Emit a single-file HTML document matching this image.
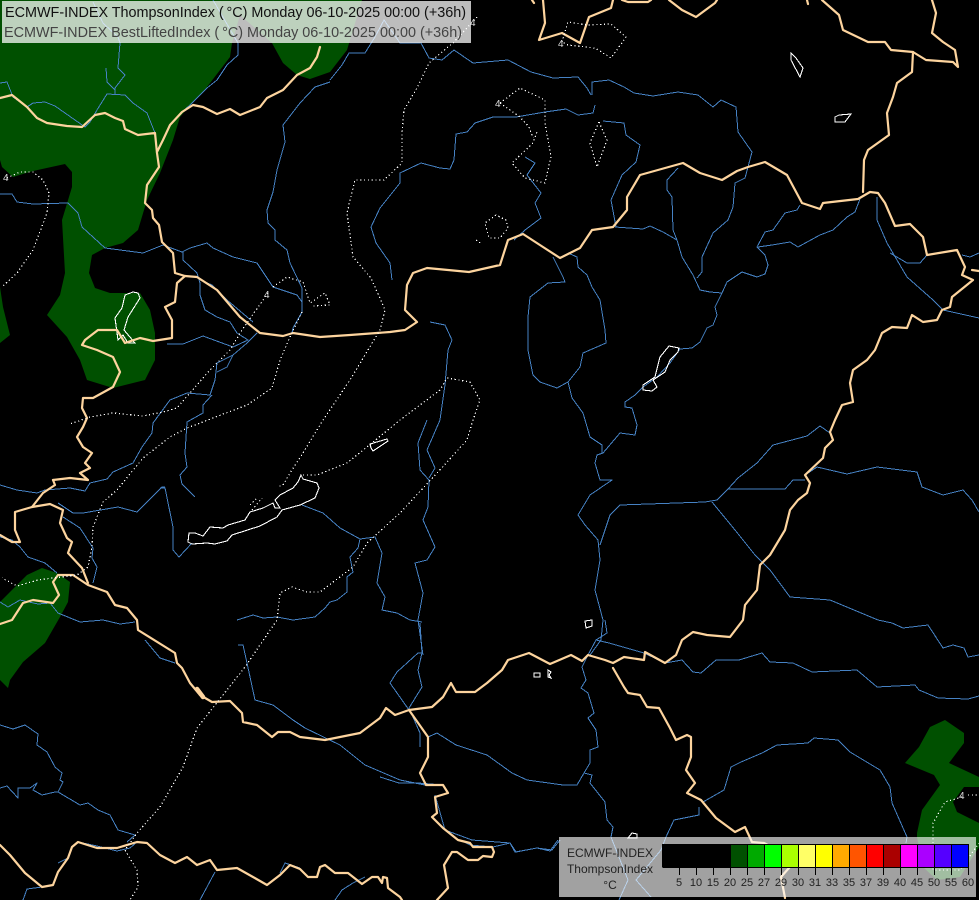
<!DOCTYPE html>
<html><head><meta charset="utf-8"><title>ECMWF-INDEX</title>
<style>
html,body{margin:0;padding:0;background:#000;width:979px;height:900px;overflow:hidden}
svg{display:block;position:absolute;left:0;top:0}
text{font-family:"Liberation Sans",sans-serif}
.r{fill:none;stroke:#4682c4;stroke-width:1;stroke-linejoin:round;shape-rendering:crispEdges}
.b{fill:none;stroke:#fdd49e;stroke-width:2.2;stroke-linejoin:round;stroke-linecap:round}
.d{fill:none;stroke:#fff;stroke-width:1.2;stroke-dasharray:1.2 2.6;shape-rendering:crispEdges}
.l{fill:none;stroke:#fff;stroke-width:1.1;shape-rendering:crispEdges}
.t{font-size:11px;fill:#222;text-anchor:middle}
</style></head><body>
<svg width="979" height="900" viewBox="0 0 979 900" xmlns="http://www.w3.org/2000/svg">
<rect width="979" height="900" fill="#000"/>
<g fill="#005000">
<path d="M0,0 L362,0 347,50 330,72 310,79 297,75 283,63 272,43 240,15 232,43 230,57 207,87 192,103 180,117 173,140 160,173 147,200 138,230 123,243 105,248 92,255 89,273 95,288 110,293 140,293 150,310 155,333 155,360 145,380 113,388 87,380 80,360 67,337 47,315 60,295 65,273 62,220 72,187 72,172 65,164 33,171 13,177 2,167 0,160Z"/>
<path d="M0,287 3,307 10,335 0,343Z"/>
<path d="M42,568 57,573 70,582 68,602 60,617 45,643 23,662 10,680 8,688 0,680 0,602 17,585 27,575Z"/>
<path d="M945,720 964,733 964,743 949,763 979,777 979,787 964,787 953,802 957,812 979,823 979,847 960,877 937,880 923,867 917,837 917,833 922,810 940,785 934,775 905,763 919,747 930,727Z"/>
</g>
<g class="r">
<path d="M0,83 7,82 13,97 20,102 27,107 33,103 45,102 55,106 75,120 85,127 90,122 97,110 107,94 125,95 133,103 147,113 153,128 155,133"/>
<path d="M93,2 103,23 118,37 120,43 118,68 125,75 115,88 115,95"/>
<path d="M106,68 107,82 115,90"/>
<path d="M213,0 238,43 238,55 227,65 217,80 207,88 195,100 190,105 182,112"/>
<path d="M330,80 342,65 349,53 365,53 375,37 384,20 400,43 421,43 429,58 442,60 454,50 473,63 508,60 531,72 553,78 578,77 587,88 591,95"/>
<path d="M592,95 592,82 609,80 624,87 634,93 653,96 678,92 698,95 713,107 721,100 736,107 738,132 752,152 748,167"/>
<path d="M330,82 315,87 300,103 283,125 285,142 277,170 273,192 267,210 268,223 275,230 275,240 287,250 290,263 302,288 302,312 293,328 292,333"/>
<path d="M595,105 593,113 578,115 566,109 545,112 516,117 493,117 475,123 467,132 456,134 454,160 450,169 440,168 421,163 400,173 400,183 380,208 371,227 376,243 390,263 392,280"/>
<path d="M603,121 624,123 626,135 640,145 636,162 622,175 611,200 616,227"/>
<path d="M525,157 535,163 527,175 541,193 535,203 541,218 525,230 514,240"/>
<path d="M615,227 643,229 650,226 663,232 677,240 682,257 693,275 700,290 710,292 722,293"/>
<path d="M678,168 667,180 667,190 672,197 673,230 677,240"/>
<path d="M748,167 745,178 735,183 733,207 728,220 713,233 702,257 702,272 697,278"/>
<path d="M800,205 797,210 785,213 773,230 765,232 757,247 765,255 768,265 765,274 757,277 742,272 727,282 722,293 715,307 717,315 713,325 707,328 700,342 692,348 680,349 670,363 657,377 643,387 635,395 625,402 625,407 632,408 637,425 635,435 620,433 603,453 597,455 595,463 600,480 612,480 590,495 578,515 585,525 598,540 600,560 595,590 603,620 601,640 590,655"/>
<path d="M758,247 772,245 790,242 798,247 820,235 833,230 847,217 855,212 860,199"/>
<path d="M568,253 577,257 578,267 587,275 592,287 600,300 605,330 606,343 583,353 580,367 568,382 557,388 540,382 533,375 528,350 528,317 530,297 548,283 565,282 563,277 553,257"/>
<path d="M568,382 572,398 583,413 590,437 602,445 602,453"/>
<path d="M877,197 877,220 887,243 907,277 933,300 943,310 979,318"/>
<path d="M890,253 907,263 920,263 927,255"/><path d="M962,255 970,257 979,253"/>
<path d="M830,433 820,426 807,436 773,445 757,463 738,478 728,489 785,489 793,480 805,480"/>
<path d="M808,473 817,467 847,474 877,467 917,472 922,487 943,495 963,490 972,500 979,512"/>
<path d="M728,489 717,500 705,502 620,505 610,515 600,545"/>
<path d="M712,502 735,530 755,555 770,570 790,597 830,600 878,620 892,623 903,628 928,625 943,648 953,645 964,648 968,657 979,655"/>
<path d="M596,640 609,643 644,653 665,663 682,660 693,672 701,673 716,660 739,660 762,653 770,662 793,663 812,672 857,670 877,687 915,685 919,690 938,698 968,699 979,696"/>
<path d="M605,620 607,633 596,640 588,655 582,667 586,680 581,688 588,693 594,713 588,718 596,730 598,747 590,750 590,763 584,773 577,785 563,785 527,780 512,773 487,755 456,745 437,733 428,737"/>
<path d="M584,773 592,775 590,783 605,802 607,820 613,827 611,837 628,880 619,900"/>
<path d="M703,802 724,790 731,767 741,762 762,753 777,745 808,743 814,738 838,740 850,752 880,770 890,787 892,803 907,837 906,843"/>
<path d="M699,807 699,815 674,820 666,837 661,850 636,880 651,897"/>
<path d="M380,777 399,783 418,783 443,785"/>
<path d="M420,623 422,653 418,670 422,687 409,708 420,733 420,747"/>
<path d="M422,653 418,653 397,672 390,683 409,710"/>
<path d="M435,795 445,830 472,840 510,843 516,852 537,848 552,850 560,840"/>
<path d="M460,840 470,845 493,847 510,843 515,852 537,848 550,851 558,840"/>
<path d="M212,395 203,405 203,413 187,422 185,453 187,467 180,475 182,484 195,497"/>
<path d="M160,488 165,488 173,527 173,550 179,557 192,543"/>
<path d="M302,505 323,513 340,528 360,539 375,537 382,553 377,583 385,597 382,610 397,613 410,620 422,622"/>
<path d="M360,539 358,548 350,557 353,572 347,577 347,592 337,600 330,602 325,608 315,617 293,620 277,617 263,618 253,615 237,620"/>
<path d="M238,645 243,645 247,663 255,700 273,705 293,720 305,728 340,745 365,765 400,780 425,785"/>
<path d="M427,420 418,443 420,470 429,480 428,507 423,520 435,547 427,560 415,563 423,593 418,620 423,655"/>
<path d="M440,420 427,450 435,468 429,478"/>
<path d="M430,322 445,325 452,340 448,350 445,385 440,420"/>
<path d="M0,194 12,194 17,202 33,204 68,203 78,213 82,227 105,248 143,253 163,245"/>
<path d="M163,245 182,252 190,248 207,243 213,248 233,257 257,263 273,287 297,295 302,302"/>
<path d="M183,252 183,260 197,273 200,283 200,295 205,310 217,317 230,322 237,333 248,340 233,347 203,336 183,344 167,344"/>
<path d="M200,280 212,285 227,300 253,322"/>
<path d="M0,485 17,490 37,493 45,490 70,488 85,491 90,483 107,479 113,472 133,463 142,447 152,433 153,423 170,400 187,393 210,395 215,380 217,363 233,355 247,343 257,333"/>
<path d="M217,372 227,367 233,355"/>
<path d="M58,503 73,513 83,513 118,507 137,512 162,487 165,487"/>
<path d="M63,517 80,528 93,548 92,558 97,567 93,583"/>
<path d="M0,537 12,540 20,547 28,557 45,563 57,573"/>
<path d="M0,602 8,607 20,600 38,604 50,603 58,613 80,622 103,620 120,624 135,622"/>
<path d="M145,640 160,658 175,663"/>
<path d="M0,725 13,729 25,725 38,734 37,745 47,752 55,767 62,773 60,780 63,782 58,792 80,805 88,803 98,810 110,815 118,830 135,835 127,842"/>
<path d="M0,788 7,786 18,798 18,788 30,788 37,783 33,790 42,795 55,792 58,792"/>
<path d="M23,900 27,889 42,887"/><path d="M58,863 68,858"/><path d="M200,900 215,872"/><path d="M280,873 285,863 300,868"/>
<path d="M78,842 97,846 117,851 130,848 137,842"/>
<path d="M335,900 342,890 353,883 365,877"/>
</g>
<g class="l">
<path d="M189,533 188,542 192,544 207,543 215,544 227,541 232,535 260,526 277,517 282,510 300,505 315,498 319,488 317,483 303,479 301,475 298,482 293,488 280,495 275,500 280,508 275,508 273,503 263,508 250,512 245,520 228,525 223,528 210,527 203,536 195,533Z"/>
<path d="M370,444 387,439 388,441 373,451 371,448Z"/>
<path d="M669,346 660,357 655,377 643,385 643,390 652,391 657,387 653,380 665,372 670,360 678,352 679,348Z"/>
<path d="M133,292 125,295 122,308 115,318 118,340 123,335 128,343 135,343 124,330 128,317 140,298 138,293Z"/>
<path d="M791,53 791,60 800,77 803,68 796,58Z"/>
<path d="M835,117 835,122 845,122 851,114 839,115Z"/>
<path d="M534,673 540,673 540,677 534,677Z"/>
<path d="M548,670 551,672 549,675 551,678 548,677Z"/>
<path d="M585,621 592,620 592,626 586,628Z"/>
<path d="M628,838 632,833 637,834 637,838Z"/>
</g>
<g class="b">
<path d="M0,98 12,95 27,107 37,118 47,123 67,126 82,127 95,115 105,113 115,118 123,121 125,129 138,135 155,133 157,153 159,167 147,185 145,203 152,210 153,218 159,225 162,242 173,253 175,273 185,276 197,277 217,290 240,317 260,333 283,336 293,333 320,337 350,335 390,332 405,330 417,322 405,310 407,285 413,273 427,268 469,272 500,265 508,240 523,234 543,247 560,258 580,248 592,230 613,227 627,210 627,197 640,175 683,163 700,173 722,180 737,171 748,167 765,162 787,175 802,203 820,209 823,203 858,199 870,192 878,193 885,203 895,226 910,224 923,237 927,255 957,250 965,267 962,275 973,280 952,297 950,307 942,310 937,320 923,322 912,315 907,328 892,327 882,333 875,350 867,360 853,370 850,383 853,402 842,405 835,420 830,432 833,440 825,448 823,458 805,475 810,483 807,493 798,500 790,510 785,530 770,555 760,565 757,590 745,605 743,620 730,637 707,635 693,632 682,640 676,655 665,663 645,652 644,660 624,657 613,663 605,660 588,655 582,661 571,655 550,664 529,653 508,660 502,670 487,683 475,692 456,692 451,683 443,697 432,707 409,710 395,715 386,708 380,718 360,733 325,740 300,737 290,732 278,732 272,737 257,725 243,722 242,713 230,701 212,702 200,695 190,683 182,668 177,663 175,653 138,630 137,620 127,608 115,605 107,592 88,585 73,575 58,575 53,582 59,595 53,603 33,600 23,603 12,620 0,624"/>
<path d="M157,152 163,140 170,125 182,112 193,105 203,107 217,114 230,109 240,115 260,107 267,98 283,90 297,75 310,68 317,57 320,47"/>
<path d="M863,192 864,160 868,150 889,135 887,113 893,97 897,83 912,72 913,52 926,60 953,62 958,67 955,50 943,42 932,33 936,13 932,0"/>
<path d="M913,52 891,50 885,42 868,42 843,30 839,15 822,0"/>
<path d="M543,0 545,23 539,40 562,33 580,43 589,17 611,8 613,0"/>
<path d="M669,0 682,10 696,17 715,3 717,0"/><path d="M622,0 628,2 648,2 651,0"/><path d="M532,0 534,3"/><path d="M807,0 808,4"/>
<path d="M972,270 979,271"/>
<path d="M53,480 55,485 43,493 32,507 15,512 15,530 20,542 12,542 0,535"/>
<path d="M32,507 50,504 63,510 60,523 67,538 72,542 68,553 82,568 88,583"/>
<path d="M53,480 70,478 88,480 80,473 90,468 85,463 92,453 83,447 77,437 83,427 87,418 82,408 83,398 93,398 113,387 120,372 113,357 97,350 82,345 85,340 98,330 117,330 125,343 140,338 153,341 172,338 172,320 165,307 175,302 177,283 185,276"/>
<path d="M409,710 428,737 428,757 420,773 426,785 443,785 448,793 435,797 437,813 432,817 443,828 458,840 470,843 473,847 492,847 494,852 492,857 483,856 478,860 468,860 457,852 452,852 444,865 448,888 437,900"/>
<path d="M613,668 624,687 628,693 640,695 647,707 659,708 670,728 676,740 687,735 691,737 691,757 686,770 695,783 687,793 701,800 716,818 735,832 745,827 752,842 764,843 796,860 781,877 785,898"/>
<path d="M0,845 10,855 25,873 42,887 53,885 58,872 68,858 72,847 78,842 97,848 117,848 137,842 147,843 160,855 175,863 187,857 197,865 210,860 217,870 237,868 253,877 267,885 280,875 290,865 300,869 308,877 317,877 320,867 325,865 335,873 348,873 362,884 372,877 378,877 382,883 383,877 387,878 388,888 400,897 402,900"/>
<path d="M197,689 203,697" stroke-width="4.5"/>
</g>
<g class="d">
<path d="M7,178 20,172 33,172 43,180 49,193 47,213 33,250 17,273 2,287"/>
<path d="M268,293 242,330 230,350 210,370 190,393 177,408 163,412 143,416 113,413 90,417 70,424"/>
<path d="M302,312 290,337 280,360 272,388 247,405 213,418 187,428 170,437 143,458 117,490 103,502 93,527 92,547 88,567 77,575 53,578 38,580 17,586 2,578"/>
<path d="M273,287 287,277 303,282 310,303 325,293 330,305 312,306"/>
<path d="M477,17 454,42 429,63 417,88 404,110 402,133 402,163 384,180 355,180 347,213 353,257 371,278 385,310 380,330 350,380 323,420 303,453 290,473 283,485 277,487"/>
<path d="M303,475 317,475 347,463 367,447 400,420 440,390 447,378 470,382 480,400 473,420 467,440 437,473 400,513 367,543 353,567 320,592 307,592 292,587 280,593 277,620 245,667 197,728 183,767 160,807 137,833 125,850 137,870 138,887 130,900"/>
<path d="M562,42 568,22 587,25 611,24 626,37 611,58 595,48 568,45Z"/>
<path d="M500,103 520,88 545,100 545,123 551,157 545,183 525,178 512,163 533,143 537,132"/>
<path d="M500,103 520,117 529,127 533,138"/>
<path d="M599,122 590,143 597,167 607,140Z"/>
<path d="M496,215 485,223 489,238 500,238 508,228 506,220Z"/>
<path d="M476,240 482,244"/>
<path d="M250,505 258,497"/><path d="M252,510 262,498"/>
<path d="M962,797 945,802 933,823 933,870 960,870 979,843"/>
<path d="M968,795 979,795"/>
</g>
<g font-size="10" fill="#ddd">
<text x="3" y="181">4</text><text x="264" y="298">4</text><text x="470" y="26">4</text><text x="558" y="47">4</text><text x="495" y="107">4</text><text x="959" y="799">4</text>
</g>

<rect x="2" y="1" width="469" height="42" fill="#fff" fill-opacity=".74"/>
<text x="5" y="17" font-size="14.4" fill="#111" textLength="461" lengthAdjust="spacing">ECMWF-INDEX ThompsonIndex (&#8201;°C) Monday 06-10-2025 00:00 (+36h)</text>
<text x="4" y="37" font-size="14.4" fill="#444" textLength="458" lengthAdjust="spacing">ECMWF-INDEX BestLiftedIndex (&#8201;°C) Monday 06-10-2025 00:00 (+36h)</text>

<rect x="559" y="837" width="417" height="60" fill="#fff" fill-opacity=".63"/>
<text x="610" y="857" font-size="12" fill="#222" text-anchor="middle">ECMWF-INDEX</text>
<text x="610" y="873" font-size="12" fill="#222" text-anchor="middle">ThompsonIndex</text>
<text x="610" y="889" font-size="12" fill="#222" text-anchor="middle">°C</text>
<g>
<rect x="662" y="844" width="68" height="23" fill="#000"/>
<rect x="731" y="844" width="17" height="23" fill="#005000"/>
<rect x="747" y="844" width="17" height="23" fill="#00aa00"/>
<rect x="764" y="844" width="17" height="23" fill="#00ff00"/>
<rect x="781" y="844" width="17" height="23" fill="#aaff00"/>
<rect x="798" y="844" width="17" height="23" fill="#ffff66"/>
<rect x="815" y="844" width="17" height="23" fill="#ffff00"/>
<rect x="832" y="844" width="17" height="23" fill="#ffaa00"/>
<rect x="849" y="844" width="17" height="23" fill="#ff5500"/>
<rect x="866" y="844" width="17" height="23" fill="#ff0000"/>
<rect x="883" y="844" width="17" height="23" fill="#aa0000"/>
<rect x="900" y="844" width="17" height="23" fill="#ff00ff"/>
<rect x="917" y="844" width="17" height="23" fill="#aa00ff"/>
<rect x="934" y="844" width="17" height="23" fill="#5500ff"/>
<rect x="951" y="844" width="17" height="23" fill="#0000ff"/>
<path d="M662.5,844.5H968.5M662.5,867.5H968.5M662.5,844V867M679.5,844V875M696.5,844V875M713.5,844V875M730.5,844V875M747.5,844V875M764.5,844V875M781.5,844V875M798.5,844V875M815.5,844V875M832.5,844V875M849.5,844V875M866.5,844V875M883.5,844V875M900.5,844V875M917.5,844V875M934.5,844V875M951.5,844V875M968.5,844V875" stroke="#000" stroke-width="1" fill="none"/>
</g>
<g class="t">
<text x="679" y="886">5</text><text x="696" y="886">10</text><text x="713" y="886">15</text><text x="730" y="886">20</text><text x="747" y="886">25</text><text x="764" y="886">27</text><text x="781" y="886">29</text><text x="798" y="886">30</text><text x="815" y="886">31</text><text x="832" y="886">33</text><text x="849" y="886">35</text><text x="866" y="886">37</text><text x="883" y="886">39</text><text x="900" y="886">40</text><text x="917" y="886">45</text><text x="934" y="886">50</text><text x="951" y="886">55</text><text x="968" y="886">60</text>
</g>
</svg>
</body></html>
